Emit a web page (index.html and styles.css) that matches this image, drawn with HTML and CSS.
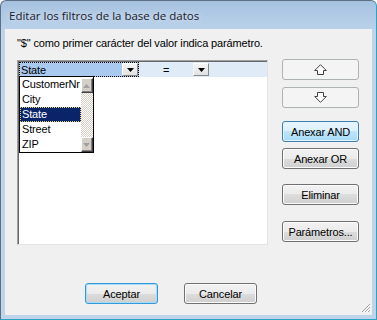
FILE: index.html
```html
<!DOCTYPE html>
<html lang="es">
<head>
    <meta charset="UTF-8">
    <title>Editar los filtros de la base de datos</title>
    <link rel="stylesheet" href="styles.css">
</head>
<body>
    <div class="window">
        <div class="titlebar">
            <span class="title">Editar los filtros de la base de datos</span>
        </div>

        <div class="client">
            <div class="main">
                <div class="left">
                    <p class="hint">"$" como primer carácter del valor indica parámetro.</p>

                    <div class="grid">
                        <div class="grid-row">
                            <div class="cell cell-field">
                                <span class="cell-text">State</span>
                                <span class="drop-btn"><svg width="7" height="4" viewBox="0 0 7 4"><path d="M0 0H7L3.5 4Z" fill="#000"/></svg></span>
                            </div>
                            <div class="cell cell-op">
                                <span class="op">=</span>
                                <span class="drop-btn"><svg width="7" height="4" viewBox="0 0 7 4"><path d="M0 0H7L3.5 4Z" fill="#000"/></svg></span>
                            </div>
                        </div>

                        <div class="dropdown">
                            <ul class="dropdown-items">
                                <li>CustomerNr</li>
                                <li>City</li>
                                <li class="selected">State</li>
                                <li>Street</li>
                                <li>ZIP</li>
                            </ul>
                            <div class="scrollbar">
                                <span class="scroll-btn"><svg width="7" height="4" viewBox="0 0 7 4"><path d="M0 4H7L3.5 0Z" fill="#a0a0a0"/></svg></span>
                                <span class="scroll-track"></span>
                                <span class="scroll-btn"><svg width="7" height="4" viewBox="0 0 7 4"><path d="M0 0H7L3.5 4Z" fill="#a0a0a0"/></svg></span>
                            </div>
                        </div>
                    </div>
                </div>

                <div class="side">
                    <button class="btn btn-disabled btn-up" disabled>
                        <svg width="13" height="11" viewBox="0 0 13 11"><path d="M6.5 0.7L12.3 6.5H9.5V10.5H3.5V6.5H0.7Z" fill="#fff" stroke="#404040" stroke-width="1"/></svg>
                    </button>
                    <button class="btn btn-disabled btn-down" disabled>
                        <svg width="13" height="11" viewBox="0 0 13 11"><path d="M6.5 10.3L12.3 4.5H9.5V0.5H3.5V4.5H0.7Z" fill="#fff" stroke="#404040" stroke-width="1"/></svg>
                    </button>
                    <button class="btn btn-hot btn-and">Anexar AND</button>
                    <button class="btn btn-or">Anexar OR</button>
                    <button class="btn btn-delete">Eliminar</button>
                    <button class="btn btn-params">Parámetros...</button>
                </div>
            </div>

            <div class="footer">
                <button class="btn btn-default btn-wide">Aceptar</button>
                <button class="btn btn-wide">Cancelar</button>
            </div>

            <svg class="grip" width="10" height="10" viewBox="0 0 10 10">
                <path d="M9 1L1 9M9 4L4 9M9 7L7 9" stroke="#a0a0a0" stroke-width="1"/>
                <path d="M9.5 2.5L2.5 9.5M9.5 5.5L5.5 9.5" stroke="#fff" stroke-width="1"/>
            </svg>
        </div>
    </div>
</body>
</html>
```

FILE: styles.css
```css
html, body {
    margin: 0;
    padding: 0;
    background-color: #fff;
}

body {
    font-family: 'Liberation Sans', Arial, sans-serif;
    font-size: 11px;
    letter-spacing: -0.15px;
    color: #000;
}

.window {
    box-sizing: border-box;
    width: 377px;
    height: 320px;
    border: 1px solid;
    border-color: #5d6f84 #2aa4c0 #2aa4c0 #5d6f84;
    border-radius: 6px 6px 0 0;
    background: linear-gradient(to bottom, #a6c2e0 0, #bad1ea 28px, #bfd4eb 28px);
    padding: 0 4px 4px 4px;
    display: flex;
    flex-direction: column;
}

.titlebar {
    height: 28px;
    display: flex;
    align-items: center;
    padding-left: 4px;
}

.title {
    font-family: 'Open Sans', 'Noto Sans', sans-serif;
    font-size: 11.5px;
    letter-spacing: 0;
    color: #1b1b2a;
    text-shadow: 0 0 6px rgba(255, 255, 255, 0.8);
    margin-top: 1px;
}

.client {
    position: relative;
    flex: 1;
    background-color: #f0f0f0;
}

.main {
    display: flex;
}

.left {
    width: 250px;
    padding: 8px 0 0 12px;
}

.hint {
    margin: 0;
    line-height: 13px;
    white-space: nowrap;
}

.grid {
    position: relative;
    box-sizing: border-box;
    width: 251px;
    height: 185px;
    margin-top: 10px;
    background-color: #fff;
    border: 1px solid;
    border-color: #a0a0a0 #e3e3e3 #e3e3e3 #a0a0a0;
    box-shadow: inset 1px 1px 0 #696969;
}

.grid-row {
    display: flex;
    height: 15px;
    margin: 1px 0 0 1px;
    background-color: #e0ebf8;
}

.cell {
    position: relative;
    display: flex;
    align-items: center;
    box-sizing: border-box;
    height: 15px;
}

.cell-field {
    width: 120px;
    background-color: #a9c9ef;
    border: 1px dotted #000;
    padding-left: 1px;
}

.cell-text {
    flex: 1;
}

.cell-op {
    width: 72px;
    padding-left: 24px;
}

.op {
    width: 30px;
}

.drop-btn {
    box-sizing: border-box;
    width: 16px;
    height: 13px;
    display: flex;
    align-items: center;
    justify-content: center;
    background: linear-gradient(to bottom, #f4f4f4, #e2e2e2);
    border: 1px solid;
    border-color: #fff #8a8a8a #8a8a8a #fff;
}

.dropdown {
    position: absolute;
    left: 1px;
    top: 15px;
    box-sizing: border-box;
    width: 75px;
    height: 77px;
    border: 1px solid #000;
    background-color: #fff;
    display: flex;
}

.dropdown-items {
    list-style: none;
    margin: 0;
    padding: 0;
    flex: 1;
}

.dropdown-items li {
    box-sizing: border-box;
    height: 15px;
    line-height: 13px;
    padding-left: 1px;
    border: 1px solid transparent;
}

.dropdown-items li.selected {
    background-color: #0a246a;
    color: #fff;
    border: 1px dotted #e8d070;
}

.scrollbar {
    width: 16px;
    display: flex;
    flex-direction: column;
    padding-top: 1px;
}

.scroll-btn {
    box-sizing: border-box;
    height: 15px;
    display: flex;
    align-items: center;
    justify-content: center;
    background-color: #d4d0c8;
    border: 1px solid;
    border-color: #fff #404040 #404040 #fff;
    box-shadow: inset -1px -1px 0 #808080;
}

.scroll-track {
    flex: 1;
    background-color: #f4f3ef;
    background-image: repeating-conic-gradient(#d4d0c8 0 25%, #fff 0 50%);
    background-size: 2px 2px;
}

.side {
    display: flex;
    flex-direction: column;
    margin-left: 15px;
    padding-top: 30px;
}

.btn {
    box-sizing: border-box;
    width: 77px;
    height: 21px;
    padding: 0;
    font-family: 'Liberation Sans', Arial, sans-serif;
    font-size: 11px;
    letter-spacing: -0.15px;
    color: #000;
    border: 1px solid #707070;
    border-radius: 3px;
    background: linear-gradient(to bottom, #f2f2f2 0%, #ebebeb 50%, #dddddd 50%, #cfcfcf 100%);
    box-shadow: inset 0 0 0 1px #fcfcfc;
    display: flex;
    align-items: center;
    justify-content: center;
}

.btn-disabled {
    border-color: #adb2b5;
    background: #f4f4f4;
    box-shadow: none;
}

.btn-hot {
    border-color: #3c7fb1;
    background: linear-gradient(to bottom, #eaf6fd 0%, #d9f0fc 50%, #bee6fd 50%, #a7d9f5 100%);
    box-shadow: inset 0 0 0 1px #e4f5fc;
}

.btn-default {
    border-color: #3399dd;
    box-shadow: inset 0 0 0 1px #a6dcf5;
}

.btn-down { margin-top: 7px; }
.btn-and { margin-top: 13px; }
.btn-or { margin-top: 6px; }
.btn-delete { margin-top: 15px; }
.btn-params { margin-top: 16px; }

.footer {
    display: flex;
    gap: 26px;
    margin-top: 38px;
    padding-left: 80px;
}

.btn-wide {
    width: 73px;
}

.grip {
    position: absolute;
    right: 1px;
    bottom: 2px;
}
```
